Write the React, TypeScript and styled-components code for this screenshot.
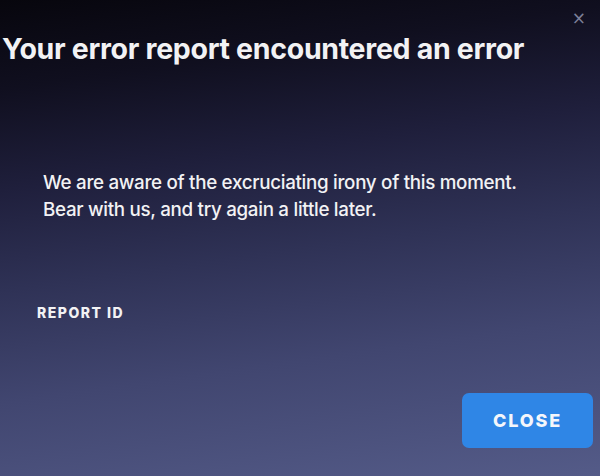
import styled, { createGlobalStyle } from "styled-components";
import * as React from "react";

const GlobalStyle = createGlobalStyle`
    html, body {
        margin: 0;
        padding: 0;
        background: #0b0a14;
    }
`;

const App = () => {
    return (
        <>
            <GlobalStyle />
            <SDialog>
                <div className="close-x">×</div>
                <h1 className="title">Your error report encountered an error</h1>
                <div className="body">
                    <p>
                        We are aware of the excruciating irony of this moment.
                        <br />
                        Bear with us, and try again a little later.
                    </p>
                </div>
                <div className="report-id">REPORT ID</div>
                <div className="footer">
                    <CloseButton>CLOSE</CloseButton>
                </div>
            </SDialog>
        </>
    );
};

export default App;

const SDialog = styled.div`
    position: relative;
    width: 600px;
    height: 476px;
    box-sizing: border-box;
    overflow: hidden;
    display: flex;
    flex-direction: column;
    font-family: "Inter", "Liberation Sans", sans-serif;
    color: #f2f2f4;
    background: linear-gradient(
        172deg,
        #07060d 0%,
        #100f1f 16%,
        #1f1f3c 34%,
        #2f3256 52%,
        #414670 72%,
        #545b88 100%
    );
    .close-x {
        position: absolute;
        top: 8px;
        right: 14px;
        font-size: 17px;
        color: #7c7f98;
        font-family: "DejaVu Sans", sans-serif;
    }
    .title {
        margin: 32px 0 0 2px;
        font-size: 28.5px;
        font-weight: 700;
        letter-spacing: -0.3px;
        line-height: 34px;
        white-space: nowrap;
    }
    .body {
        padding: 103px 0 0 43px;
        p {
            margin: 0;
            font-size: 18.8px;
            font-weight: 500;
            line-height: 27px;
            letter-spacing: -0.3px;
            white-space: nowrap;
        }
    }
    .report-id {
        margin: 82px 0 0 37px;
        font-size: 14px;
        font-weight: 800;
        letter-spacing: 1.5px;
        line-height: 16px;
    }
    .footer {
        display: flex;
        justify-content: flex-end;
        padding: 72px 7px 0 0;
    }
`;

const CloseButton = styled.button`
    width: 131px;
    height: 55px;
    border: none;
    border-radius: 7px;
    background: #2f86e6;
    color: #f4f6fb;
    font-family: "Inter", "Liberation Sans", sans-serif;
    font-size: 18px;
    font-weight: 800;
    letter-spacing: 1.8px;
    cursor: pointer;
`;
